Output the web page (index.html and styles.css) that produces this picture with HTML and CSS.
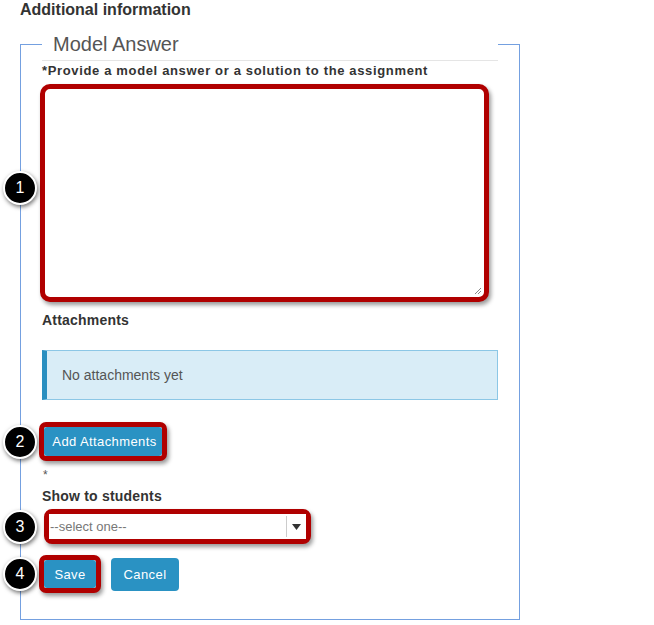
FILE: index.html
```html
<!DOCTYPE html>
<html>
<head>
<meta charset="utf-8">
<link rel="stylesheet" href="styles.css">
</head>
<body>
<h4 class="page-title">Additional information</h4>
<fieldset class="panel">
  <legend class="panel-legend">Model Answer</legend>
  <div class="field-label">*Provide a model answer or a solution to the assignment</div>
  <div class="callout callout-area">
    <span class="badge badge-up">1</span>
    <div class="ring ring-area">
      <svg class="grip" width="8" height="8" viewBox="0 0 8 8"><path d="M7 1L1 7M7 4L4 7" stroke="#888" stroke-width="1" fill="none"/></svg>
    </div>
  </div>
  <div class="section-label">Attachments</div>
  <div class="alert-info">No attachments yet</div>
  <div class="callout callout-btn">
    <span class="badge">2</span>
    <span class="ring ring-btn"><button class="btn btn-add">Add Attachments</button></span>
  </div>
  <div class="req">*</div>
  <div class="section-label label-show">Show to students</div>
  <div class="callout callout-select">
    <span class="badge">3</span>
    <span class="ring ring-select">
      <span class="select">
        <span class="select-text">--select one--</span>
        <span class="select-arrow"><svg width="9" height="6" viewBox="0 0 9 6"><path d="M0 0H9L4.5 6Z" fill="#333"/></svg></span>
      </span>
    </span>
  </div>
  <div class="callout actions">
    <span class="badge">4</span>
    <span class="ring ring-btn"><button class="btn btn-save">Save</button></span>
    <button class="btn btn-cancel">Cancel</button>
  </div>
</fieldset>
</body>
</html>
```
FILE: styles.css
```css
html, body {
  margin: 0;
  padding: 0;
  background: #fff;
}
body {
  font-family: "Liberation Sans", Arial, sans-serif;
  color: #333;
  width: 654px;
  height: 625px;
  overflow: hidden;
}
.page-title {
  margin: 0 0 0 20px;
  font-size: 16px;
  line-height: 20px;
  font-weight: bold;
  color: #333;
}
.panel {
  margin: 8px 0 0 20px;
  width: 500px;
  box-sizing: border-box;
  border: 1px solid #74a0e0;
  padding: 0 21px 26px 21px;
  min-width: 0;
}
.panel-legend {
  width: 100%;
  box-sizing: border-box;
  padding: 0 0 0 11px;
  font-size: 20px;
  line-height: 32px;
  color: #555;
  font-weight: normal;
  border-bottom: 1px solid #e5e5e5;
}
.field-label {
  margin-top: 1px;
  font-size: 13px;
  line-height: 18px;
  font-weight: bold;
  color: #333;
  letter-spacing: 0.65px;
}
.callout {
  position: relative;
}
.badge {
  position: absolute;
  left: -39px;
  top: 50%;
  transform: translateY(-50%);
  width: 30px;
  height: 30px;
  border-radius: 50%;
  border: 2px solid #fff;
  background: #000;
  color: #fff;
  font-size: 16px;
  line-height: 30px;
  text-align: center;
  box-shadow: 1px 2px 4px rgba(0, 0, 0, 0.55);
  z-index: 2;
}
.badge-up {
  margin-top: -5px;
}
.ring {
  border: 5px solid #b00000;
  border-radius: 8px;
  box-shadow: 2px 3px 4px rgba(0, 0, 0, 0.4);
  background: #fff;
}
.callout-area {
  margin-top: 4px;
}
.ring-area {
  position: relative;
  display: block;
  width: 449px;
  height: 218px;
  box-sizing: border-box;
  margin-left: -2px;
  border-radius: 10px;
}
.grip {
  position: absolute;
  right: 2px;
  bottom: 2px;
}
.section-label {
  margin-top: 8px;
  font-size: 14px;
  line-height: 20px;
  font-weight: bold;
  color: #333;
  letter-spacing: 0.2px;
}
.alert-info {
  margin-top: 20px;
  height: 50px;
  box-sizing: border-box;
  border: 1px solid #8cc7e6;
  border-left: 5px solid #2a8fc0;
  background: #d9edf7;
  padding-left: 15px;
  font-size: 14px;
  line-height: 48px;
  color: #555;
}
.callout-btn {
  margin-top: 22px;
  display: flex;
}
.ring-btn {
  display: inline-flex;
  margin-left: -3px;
  border-radius: 7px;
}
.btn {
  font-family: "Liberation Sans", Arial, sans-serif;
  font-size: 13px;
  letter-spacing: 0.4px;
  color: #fff;
  background: #2a92c3;
  border: none;
  border-radius: 3px;
  padding: 0;
  margin: 0;
  cursor: pointer;
}
.btn-add {
  width: 118px;
  height: 29px;
  padding-left: 3px;
}
.req {
  margin-top: 5px;
  font-size: 12px;
  line-height: 18px;
  color: #555;
  padding-left: 1px;
}
.label-show {
  margin-top: 2px;
}
.callout-select {
  margin-top: 3px;
  display: flex;
}
.ring-select {
  display: inline-flex;
  margin-left: 2px;
}
.select {
  display: flex;
  align-items: center;
  width: 257px;
  height: 25px;
  background: #fff;
}
.select-text {
  flex: 1;
  padding-left: 1px;
  font-size: 13px;
  color: #777;
}
.select-arrow {
  width: 19px;
  height: 21px;
  border-left: 1px solid #ccc;
  display: flex;
  align-items: center;
  justify-content: center;
}
.actions {
  margin-top: 11px;
  display: flex;
  align-items: center;
  gap: 10px;
}
.btn-save {
  width: 52px;
  height: 28px;
}
.btn-cancel {
  width: 68px;
  height: 33px;
  border-radius: 4px;
}
```
